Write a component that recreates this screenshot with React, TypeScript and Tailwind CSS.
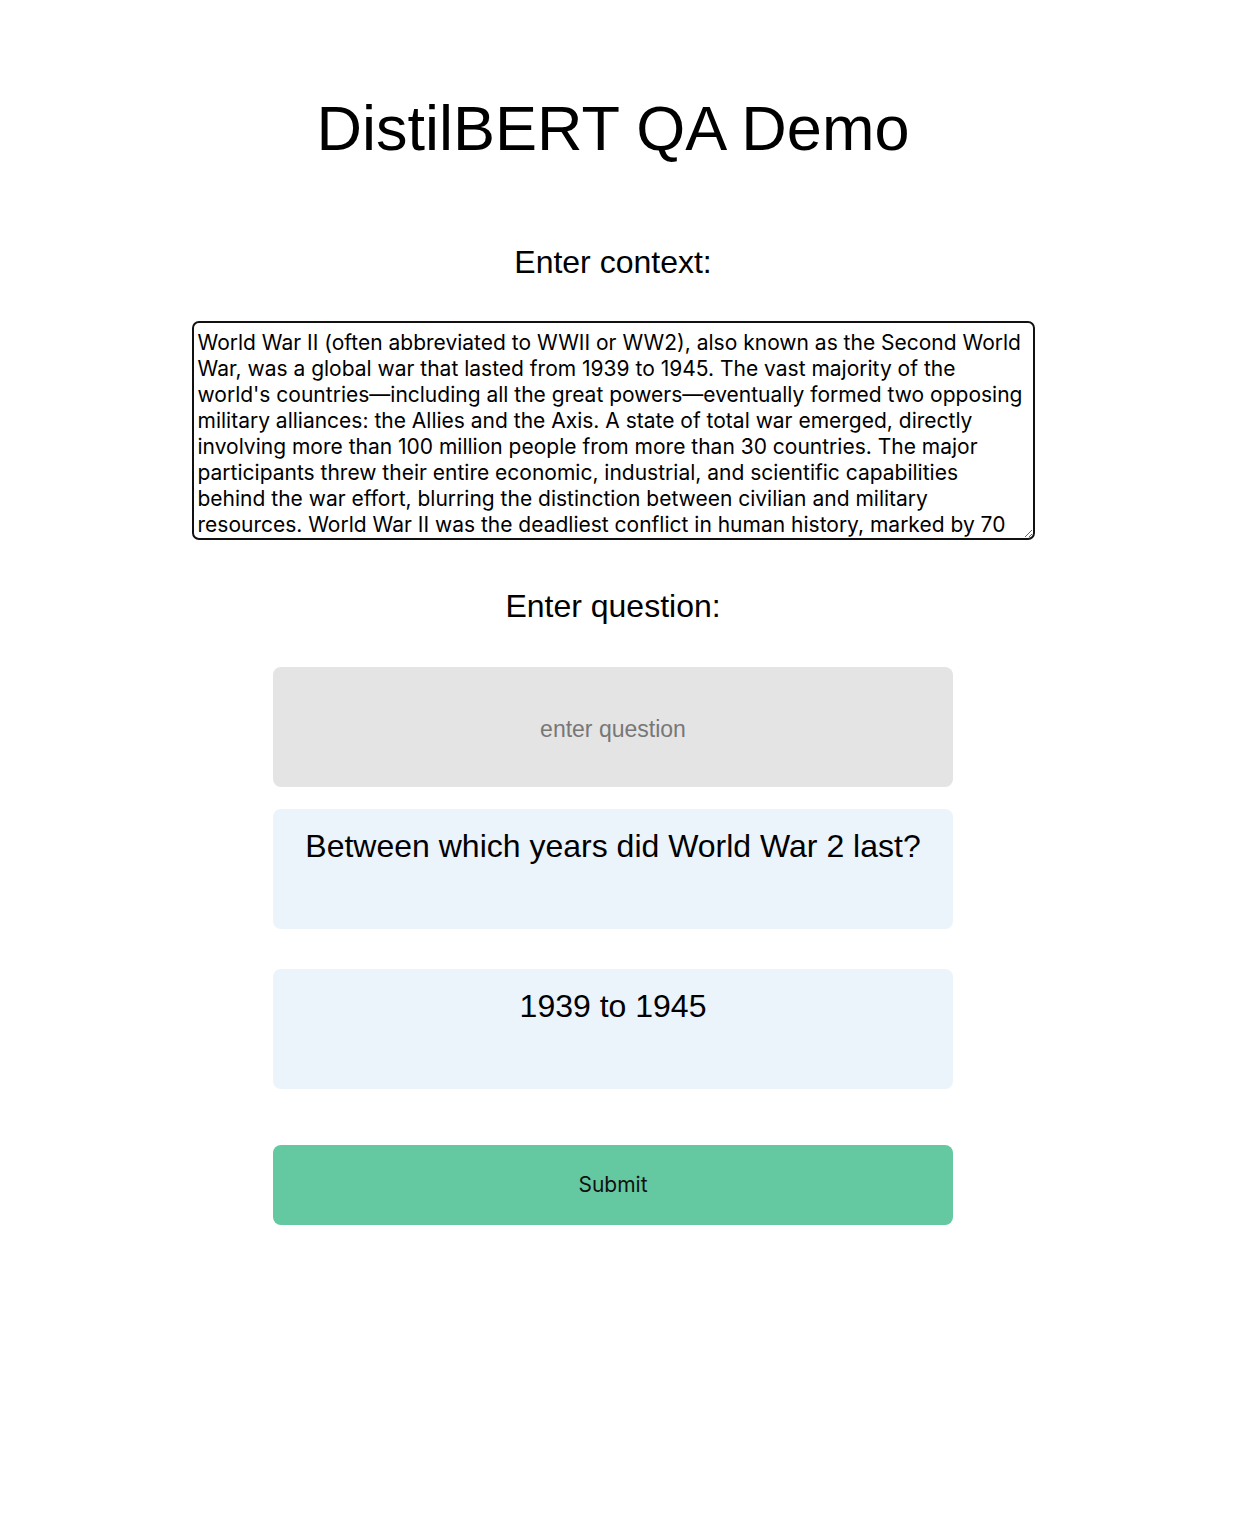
import React from "react";

const CONTEXT =
  "World War II (often abbreviated to WWII or WW2), also known as the Second World War, was a global war that lasted from 1939 to 1945. The vast majority of the world's countries—including all the great powers—eventually formed two opposing military alliances: the Allies and the Axis. A state of total war emerged, directly involving more than 100 million people from more than 30 countries. The major participants threw their entire economic, industrial, and scientific capabilities behind the war effort, blurring the distinction between civilian and military resources. World War II was the deadliest conflict in human history, marked by 70 to 85 million fatalities, most of whom were civilians in the Soviet Union and China. It included massacres, the genocide of the Holocaust, strategic bombing, premeditated death from starvation and disease, and the only use of nuclear weapons in war.";

export default function App() {
  return (
    <div className="min-h-[1531px] bg-white pr-[15px] flex flex-col items-center text-black font-['Liberation_Sans',Arial,sans-serif]">
      {/* Title */}
      <h1 className="mt-[97px] text-[63px] leading-none font-normal">DistilBERT QA Demo</h1>

      {/* Context */}
      <h2 className="mt-[86px] text-[32px] leading-none font-normal">Enter context:</h2>
      <textarea
        className="mt-[43px] w-[843px] h-[219px] border-2 border-[#111] rounded-[7px] px-[4px] pt-[7px] pb-[4px] text-[21px] leading-[26px] font-['Inter',sans-serif] text-black resize-y"
        defaultValue={CONTEXT}
      />

      {/* Question */}
      <h2 className="mt-[50px] text-[32px] leading-none font-normal">Enter question:</h2>
      <input
        className="mt-[45px] w-[680px] h-[120px] rounded-[8px] bg-[#e4e4e4] pt-[4px] text-center text-[23px] outline-none placeholder:text-[#777]"
        placeholder="enter question"
      />

      <div className="mt-[22px] w-[680px] h-[120px] rounded-[8px] bg-[#ebf3fb] pt-[21px] text-center text-[32px] leading-none">
        Between which years did World War 2 last?
      </div>

      <div className="mt-[40px] w-[680px] h-[120px] rounded-[8px] bg-[#ebf3fb] pt-[21px] text-center text-[32px] leading-none">
        1939 to 1945
      </div>

      {/* Submit */}
      <button className="mt-[56px] w-[680px] h-[80px] rounded-[8px] bg-[#64c8a0] text-[21px] text-[#111] font-['Inter',sans-serif]">
        Submit
      </button>
    </div>
  );
}
